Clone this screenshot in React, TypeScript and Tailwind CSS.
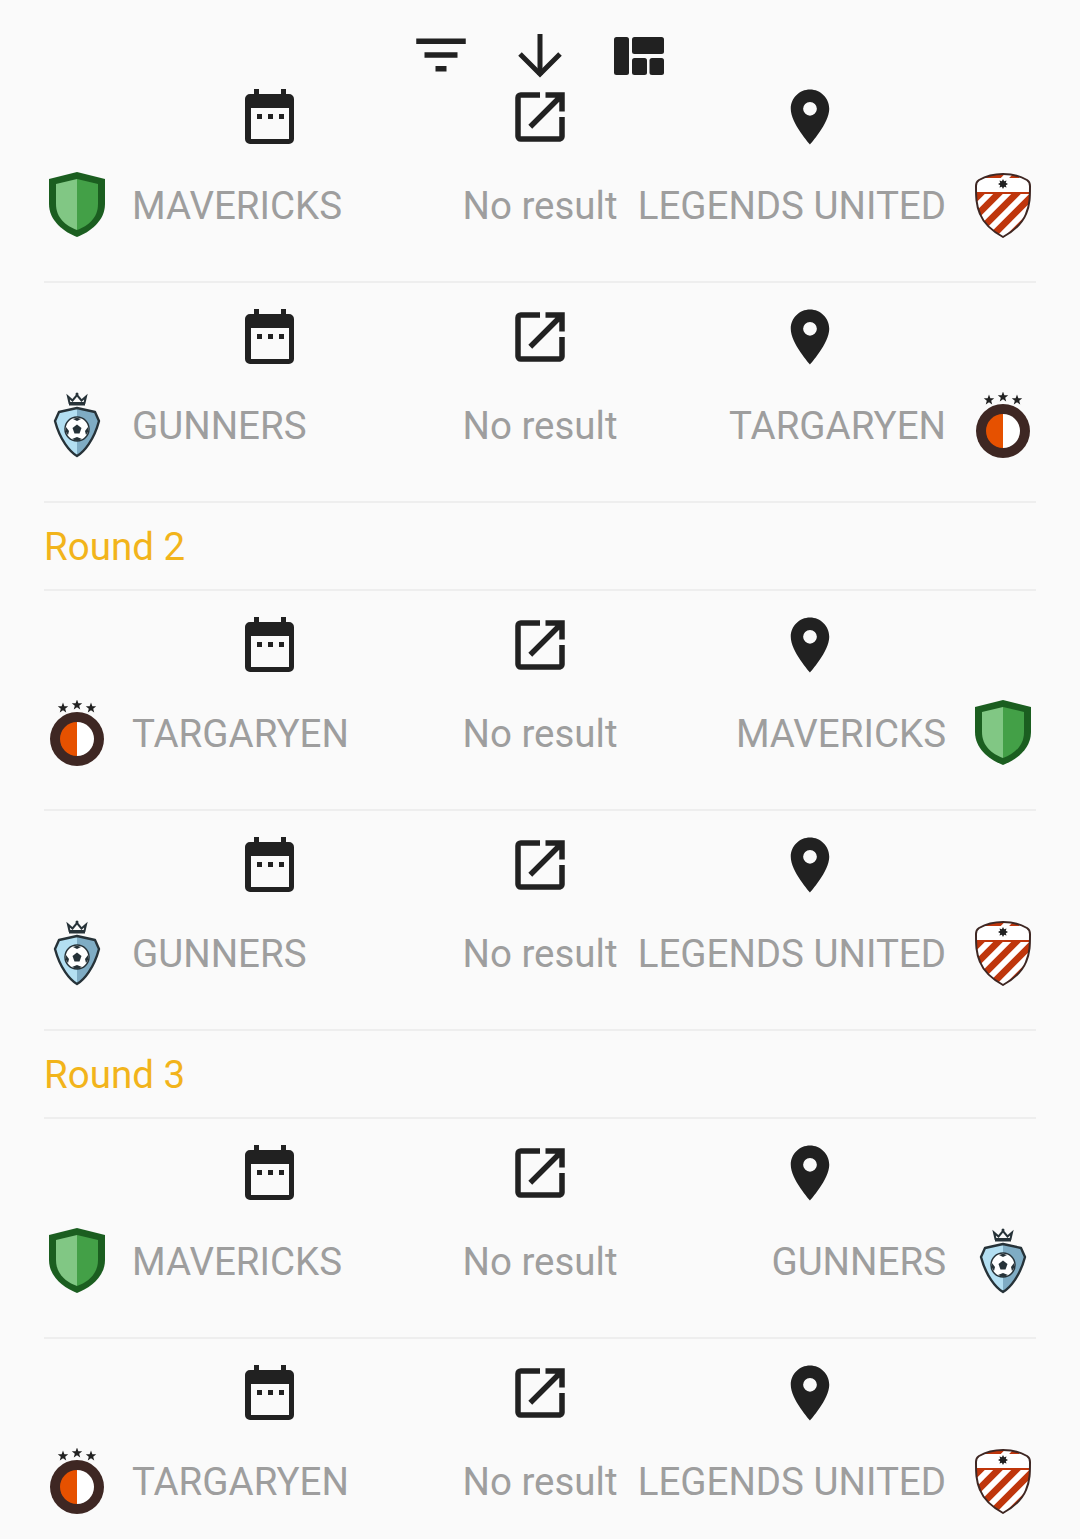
import { MdFilterList, MdOpenInNew, MdPlace } from 'react-icons/md'

type Team = 'mavericks' | 'legends' | 'gunners' | 'targaryen'

const names: Record<Team, string> = {
  mavericks: 'MAVERICKS',
  legends: 'LEGENDS UNITED',
  gunners: 'GUNNERS',
  targaryen: 'TARGARYEN',
}

const sections: { round?: string; games: [Team, Team][] }[] = [
  { games: [['mavericks', 'legends'], ['gunners', 'targaryen']] },
  { round: 'Round 2', games: [['targaryen', 'mavericks'], ['gunners', 'legends']] },
  { round: 'Round 3', games: [['mavericks', 'gunners'], ['targaryen', 'legends']] },
]

const star = (cx: number, cy: number, r: number, points = 5, inner = 0.42) => {
  const pts = []
  for (let i = 0; i < points * 2; i++) {
    const rad = i % 2 === 0 ? r : r * inner
    const a = (Math.PI / points) * i - Math.PI / 2
    pts.push(`${(cx + rad * Math.cos(a)).toFixed(2)},${(cy + rad * Math.sin(a)).toFixed(2)}`)
  }
  return pts.join(' ')
}

const MavericksLogo = () => (
  <svg viewBox="0 0 66 66" className="w-[66px] h-[66px]">
    <path d="M33 0 L61 7 V32 C61 49 46 60 33 65 C20 60 5 49 5 32 V7 Z" fill="#1b5e20" />
    <path d="M33 7 V58 C22 54 12 46 12 32 V12 Z" fill="#81c784" />
    <path d="M33 7 L54 12 V32 C54 46 44 54 33 58 Z" fill="#43a047" />
  </svg>
)

const LegendsLogo = ({ id }: { id: string }) => {
  const shield = 'M33 2 C42 2 50 4 57 8 Q60 10 60 14 C60 24 60 33 56 42 C52 52 42 60 33 65 C24 60 14 52 10 42 C6 33 6 24 6 14 Q6 10 9 8 C16 4 24 2 33 2 Z'
  return (
    <svg viewBox="0 0 66 66" className="w-[66px] h-[66px]">
      <defs>
        <clipPath id={id}>
          <path d={shield} />
        </clipPath>
      </defs>
      <path d={shield} fill="#ffffff" />
      <g clipPath={`url(#${id})`}>
        <path d="M0 0 H66 V6 H0 Z" fill="#bf360c" />
        <path d="M0 20 H66 V66 H0 Z" fill="#bf360c" />
        <g stroke="#ffffff" strokeWidth="6">
          <path d="M0 41 L41 0" />
          <path d="M0 59 L59 0" />
          <path d="M11 66 L66 11" />
          <path d="M29 66 L66 29" />
        </g>
        <path d="M0 6 H66 V20 H0 Z" fill="#ffffff" />
        <path d="M0 20 H66 V22 H0 Z" fill="#bf360c" />
      </g>
      <path d={shield} fill="none" stroke="#3e2723" strokeWidth="2" />
      <polygon points={star(33, 12, 5, 8, 0.6)} fill="#212121" />
    </svg>
  )
}

const GunnersLogo = () => (
  <svg viewBox="0 0 66 66" className="w-[66px] h-[66px]">
    <path d="M24 4.5 L28.5 8.5 L33 3 L37.5 8.5 L42 4.5 L40.5 11 H25.5 Z" fill="none" stroke="#263238" strokeWidth="2" />
    <circle cx="33" cy="2" r="1.5" fill="#263238" />
    <rect x="25" y="11.5" width="16" height="2" fill="#263238" />
    <path d="M33 16 V64 C26 60 16 48 11 29 L15 20 Z" fill="#b3dff2" />
    <path d="M33 16 L51 20 L55 29 C50 48 40 60 33 64 Z" fill="#7facc4" />
    <path d="M33 16 L51 20 L55 29 C50 48 40 60 33 64 C26 60 16 48 11 29 L15 20 Z" fill="none" stroke="#263238" strokeWidth="2.4" strokeLinejoin="round" />
    <circle cx="33" cy="37" r="12" fill="#ffffff" stroke="#263238" strokeWidth="1.5" />
    <polygon points="33,32.5 37.5,36 35.5,41.5 30.5,41.5 28.5,36" fill="#263238" />
    <path d="M29 27 L33 29 L37 27 L34 26 H32 Z M22 35 L25 39 L24 43 L22 40 Z M44 35 L41 39 L42 43 L44 40 Z M28 47 L33 45 L38 47 L33 49 Z" fill="#263238" />
  </svg>
)

const TargaryenLogo = () => (
  <svg viewBox="0 0 66 66" className="w-[66px] h-[66px]">
    <polygon points={star(19, 8, 5.5)} fill="#212121" />
    <polygon points={star(33, 5, 5.5)} fill="#212121" />
    <polygon points={star(47, 8, 5.5)} fill="#212121" />
    <circle cx="33" cy="39" r="27" fill="#3e2723" />
    <path d="M33 22 A17 17 0 0 0 33 56 Z" fill="#e65100" />
    <path d="M33 22 A17 17 0 0 1 33 56 Z" fill="#ffffff" />
  </svg>
)

const TeamLogo = ({ team, id }: { team: Team; id: string }) => {
  if (team === 'mavericks') return <MavericksLogo />
  if (team === 'legends') return <LegendsLogo id={id} />
  if (team === 'gunners') return <GunnersLogo />
  return <TargaryenLogo />
}

const CalendarIcon = () => (
  <svg viewBox="0 0 66 66" className="w-[66px] h-[66px]" fill="#212121">
    <rect x="17" y="5" width="5" height="7" />
    <rect x="44" y="5" width="5" height="7" />
    <path fillRule="evenodd" d="M13 10 H52 A5 5 0 0 1 57 15 V55 A5 5 0 0 1 52 60 H13 A5 5 0 0 1 8 55 V15 A5 5 0 0 1 13 10 Z M14 24 V55 H52 V24 Z" />
    <rect x="20" y="30" width="5" height="5" />
    <rect x="31" y="30" width="5" height="5" />
    <rect x="42" y="30" width="5" height="5" />
  </svg>
)

const ArrowIcon = () => (
  <svg viewBox="0 0 66 66" className="w-[66px] h-[66px]" fill="none" stroke="#212121" strokeWidth="5">
    <path d="M33 12 V53" />
    <path d="M13 32 L33 52 L53 32" />
  </svg>
)

const QuiltIcon = () => (
  <svg viewBox="0 0 66 66" className="w-[66px] h-[66px]" fill="#212121">
    <rect x="8" y="15" width="15" height="38" rx="2.5" />
    <rect x="26" y="15" width="32" height="17" rx="2.5" />
    <rect x="26" y="36" width="15" height="17" rx="2.5" />
    <rect x="43.5" y="36" width="14.5" height="17" rx="2.5" />
  </svg>
)

const Game = ({ home, away, id }: { home: Team; away: Team; id: string }) => (
  <div className="pt-[21px] pb-[43px] border-b-2 border-[#eeeeee]">
    <div className="grid grid-cols-3 w-[810px] mx-auto justify-items-center text-[#212121] text-[66px]">
      <CalendarIcon />
      <MdOpenInNew />
      <MdPlace />
    </div>
    <div className="flex items-center mt-[22px] text-[38.5px] leading-[64px] text-[#9e9e9e]">
      <TeamLogo team={home} id={`${id}-home`} />
      <div className="flex-1 grid grid-cols-[1fr_auto_1fr] mx-[23px] pt-[2px] whitespace-nowrap">
        <span className="-ml-px">{names[home]}</span>
        <span>No result</span>
        <span className="text-right pr-px">{names[away]}</span>
      </div>
      <TeamLogo team={away} id={`${id}-away`} />
    </div>
  </div>
)

export default function App() {
  return (
    <div className="h-[1539px] overflow-hidden bg-[#fafafa] font-['Roboto',sans-serif]">
      <div className="h-[63px] pt-[22px] flex justify-center gap-[33px] text-[#212121] text-[66px]">
        <MdFilterList />
        <ArrowIcon />
        <QuiltIcon />
      </div>
      <div className="mx-[44px]">
        {sections.map((section, s) => (
          <div key={s}>
            {section.round && (
              <div className="h-[88px] pt-[20px] border-b-2 border-[#eeeeee] text-[38.5px] leading-[48px] text-[#f2b41b]">
                {section.round}
              </div>
            )}
            {section.games.map(([home, away], g) => (
              <Game key={g} home={home} away={away} id={`g${s}-${g}`} />
            ))}
          </div>
        ))}
      </div>
    </div>
  )
}
